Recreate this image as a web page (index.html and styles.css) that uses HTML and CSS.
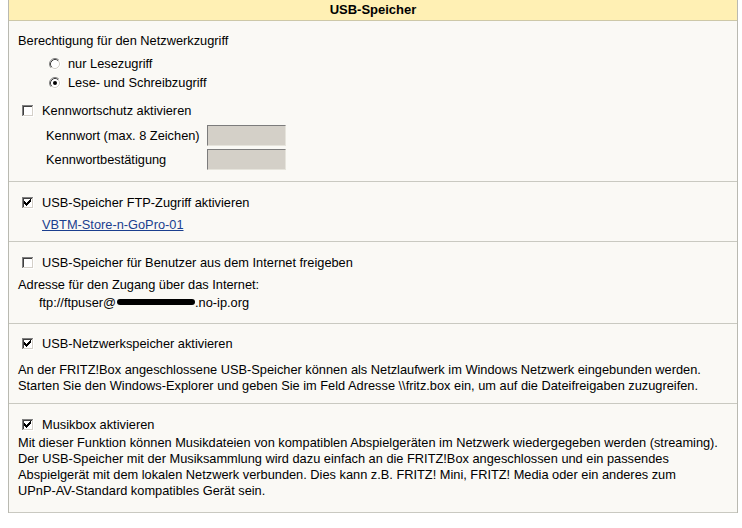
FILE: index.html
```html
<!DOCTYPE html>
<html lang="de">
<head>
    <meta charset="UTF-8">
    <title>USB-Speicher</title>
    <link rel="stylesheet" href="styles.css">
</head>
<body>

    <!-- Windows-Steuerelemente als Symbole -->
    <svg class="defs" width="0" height="0">
        <symbol id="box" viewBox="0 0 12 12">
            <path fill="#808080" d="M0 0h11v1H1v10H0z"/>
            <path fill="#404040" d="M1 1h9v1H2v8H1z"/>
            <path fill="#ffffff" d="M11 0h1v12H0v-1h11z"/>
            <path fill="#d4d0c8" d="M10 1h1v10H1v-1h9z"/>
            <path fill="#ffffff" d="M2 2h8v8H2z"/>
        </symbol>
        <symbol id="tick" viewBox="0 0 12 12">
            <path fill="#000" d="M2 4h1v3H2z M3 5h1v3H3z M4 6h1v3H4z M5 5h1v3H5z M6 4h1v3H6z M7 3h1v3H7z M8 2h1v3H8z"/>
        </symbol>
        <symbol id="radio" viewBox="0 0 12 12">
            <circle cx="6" cy="6" r="4.5" fill="#fff"/>
            <path fill="none" stroke="#808080" d="M2.11 9.89A5.5 5.5 0 0 1 9.89 2.11"/>
            <path fill="none" stroke="#ffffff" d="M9.89 2.11A5.5 5.5 0 0 1 2.11 9.89"/>
            <path fill="none" stroke="#404040" d="M2.82 9.18A4.5 4.5 0 0 1 9.18 2.82"/>
            <path fill="none" stroke="#d4d0c8" d="M9.18 2.82A4.5 4.5 0 0 1 2.82 9.18"/>
        </symbol>
    </svg>

    <div class="panel">
        <div class="panel-head">USB-Speicher</div>

        <div class="section s-rights">
            <div class="line">Berechtigung für den Netzwerkzugriff</div>
            <div class="radios">
                <label class="radio">
                    <svg class="ctl" viewBox="0 0 12 12"><use href="#radio"/></svg>
                    nur Lesezugriff
                </label>
                <label class="radio">
                    <svg class="ctl" viewBox="0 0 12 12"><use href="#radio"/><circle cx="6" cy="6" r="2" fill="#000"/></svg>
                    Lese- und Schreibzugriff
                </label>
            </div>
            <label class="check">
                <svg class="ctl" viewBox="0 0 12 12"><use href="#box"/></svg>
                Kennwortschutz aktivieren
            </label>
            <div class="field">
                <span class="field-label">Kennwort (max. 8 Zeichen)</span>
                <input class="field-input" type="password" disabled>
            </div>
            <div class="field">
                <span class="field-label">Kennwortbestätigung</span>
                <input class="field-input" type="password" disabled>
            </div>
        </div>

        <div class="section s-ftp">
            <label class="check">
                <svg class="ctl" viewBox="0 0 12 12"><use href="#box"/><use href="#tick"/></svg>
                USB-Speicher FTP-Zugriff aktivieren
            </label>
            <a class="storage-link" href="#">VBTM-Store-n-GoPro-01</a>
        </div>

        <div class="section s-internet">
            <label class="check">
                <svg class="ctl" viewBox="0 0 12 12"><use href="#box"/></svg>
                USB-Speicher für Benutzer aus dem Internet freigeben
            </label>
            <div class="line addr-title">Adresse für den Zugang über das Internet:</div>
            <div class="line addr">ftp://ftpuser@<span class="redacted"></span>.no-ip.org</div>
        </div>

        <div class="section s-nas">
            <label class="check">
                <svg class="ctl" viewBox="0 0 12 12"><use href="#box"/><use href="#tick"/></svg>
                USB-Netzwerkspeicher aktivieren
            </label>
            <p class="info">An der FRITZ!Box angeschlossene USB-Speicher können als Netzlaufwerk im Windows Netzwerk eingebunden werden.<br>
            Starten Sie den Windows-Explorer und geben Sie im Feld Adresse \\fritz.box ein, um auf die Dateifreigaben zuzugreifen.</p>
        </div>

        <div class="section s-music">
            <label class="check">
                <svg class="ctl" viewBox="0 0 12 12"><use href="#box"/><use href="#tick"/></svg>
                Musikbox aktivieren
            </label>
            <p class="info">Mit dieser Funktion können Musikdateien von kompatiblen Abspielgeräten im Netzwerk wiedergegeben werden (streaming).<br>
            Der USB-Speicher mit der Musiksammlung wird dazu einfach an die FRITZ!Box angeschlossen und ein passendes<br>
            Abspielgerät mit dem lokalen Netzwerk verbunden. Dies kann z.B. FRITZ! Mini, FRITZ! Media oder ein anderes zum<br>
            UPnP-AV-Standard kompatibles Gerät sein.</p>
        </div>
    </div>

</body>
</html>
```

FILE: styles.css
```css
body {
    margin: 0;
    background-color: #ffffff;
    font-family: "Liberation Sans", Arial, sans-serif;
    font-size: 12.8px;
    line-height: 16px;
    color: #000000;
}

.defs {
    position: absolute;
    width: 0;
    height: 0;
}

/* Rahmen der Einstellungsseite */
.panel {
    margin-left: 8px;
    width: 728px;
    border-left: 1px solid #b9b9b1;
    border-right: 1px solid #b9b9b1;
    background-color: #faf9f5;
}

.panel-head {
    height: 20px;
    line-height: 20px;
    background-color: #fff0b4;
    border-bottom: 1px solid #cdc8a8;
    text-align: center;
    font-size: 13px;
    font-weight: bold;
}

.section {
    padding: 11px 9px 0 9px;
    border-bottom: 1px solid #c9c9c1;
    white-space: nowrap;
}

.line {
    height: 16px;
}

/* Steuerelemente */
.ctl {
    width: 12px;
    height: 12px;
    flex: none;
}

.check {
    display: flex;
    align-items: center;
    gap: 8px;
    height: 20px;
    padding-left: 4px;
}

.radios {
    margin-top: 5px;
    padding-left: 31px;
}

.radio {
    display: flex;
    align-items: center;
    gap: 7px;
    height: 19px;
}

.field {
    display: flex;
    align-items: center;
    padding-left: 28px;
    margin-top: 3px;
}

.field-label {
    width: 161px;
}

.field-input {
    width: 79px;
    height: 21px;
    box-sizing: border-box;
    margin: 0;
    padding: 0;
    background-color: #d4d0c8;
    border: 1px solid;
    border-color: #7c7c7c #e6e4dc #e6e4dc #7c7c7c;
    border-radius: 0;
}

.info {
    margin: 0;
}

/* Abstände je Abschnitt */
.s-rights {
    padding-top: 12px;
    padding-bottom: 11px;
}

.s-rights .check {
    margin-top: 9px;
}

.s-rights .check + .field {
    margin-top: 4px;
}

.s-ftp {
    padding-bottom: 8px;
}

.storage-link {
    display: block;
    margin: 4px 0 0 24px;
    color: #1b3f8f;
    text-decoration: underline;
}

.s-internet {
    padding-bottom: 12px;
}

.addr-title {
    margin-top: 4px;
}

.addr {
    margin-top: 2px;
    padding-left: 21px;
}

.redacted {
    display: inline-block;
    width: 78px;
    height: 6px;
    margin-left: 1px;
    background-color: #000000;
    border-radius: 3px;
    vertical-align: 2px;
}

.s-nas {
    padding-top: 10px;
    padding-bottom: 9px;
}

.s-nas .info {
    margin-top: 8px;
}

.s-music {
    padding-bottom: 13px;
}
```
